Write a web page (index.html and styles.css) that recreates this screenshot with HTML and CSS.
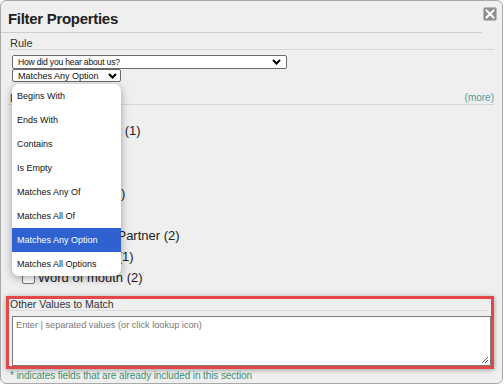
FILE: index.html
```html
<!DOCTYPE html>
<html lang="en">
<head>
    <meta charset="UTF-8">
    <meta name="viewport" content="width=device-width, initial-scale=1.0">
    <title>Filter Properties</title>
    <link rel="stylesheet" href="styles.css">
</head>
<body>
    <div class="dialog">
        <div class="title-bar">
            <h1>Filter Properties</h1>
        </div>
        <span class="close-btn">
            <svg width="14" height="14" viewBox="0 0 14 14">
                <rect x="0.5" y="0.5" width="13" height="13" rx="2" fill="#8d8d8d" stroke="#b8b8b8"/>
                <path d="M3.5 3.5 L10.5 10.5 M10.5 3.5 L3.5 10.5" stroke="#fff" stroke-width="2.2" stroke-linecap="round"/>
            </svg>
        </span>

        <div class="row-label">Rule</div>
        <div class="select wide">
            <span>How did you hear about us?</span>
            <svg class="chev" width="9" height="6" viewBox="0 0 9 6"><path d="M1 1 L4.5 4.5 L8 1" fill="none" stroke="#000" stroke-width="2"/></svg>
        </div>
        <div class="select narrow">
            <span>Matches Any Option</span>
            <svg class="chev" width="9" height="6" viewBox="0 0 9 6"><path d="M1 1 L4.5 4.5 L8 1" fill="none" stroke="#000" stroke-width="2"/></svg>
        </div>

        <div class="row-label lookup">
            <span>Lookup Values</span>
            <a href="#" class="more">(more)</a>
        </div>
        <ul class="values">
            <li><span class="box"></span>Advertisement (1)</li>
            <li><span class="box"></span>Email (3)</li>
            <li><span class="box"></span>Event (1)</li>
            <li><span class="box"></span>Newsletters (2)</li>
            <li><span class="box"></span>Search (4)</li>
            <li><span class="box"></span>Referral from Partner (2)</li>
            <li><span class="box"></span>Trade Shows (1)</li>
            <li><span class="box"></span>Word of mouth (2)</li>
        </ul>

        <div class="other">
            <div class="other-label">Other Values to Match</div>
            <div class="textarea">
                <span class="placeholder">Enter | separated values (or click lookup icon)</span>
                <svg class="grip" width="8" height="8" viewBox="0 0 8 8"><path d="M7 1 L1 7 M7 4 L4 7" stroke="#555" stroke-width="1"/></svg>
            </div>
        </div>
        <p class="note">* indicates fields that are already included in this section</p>

        <ul class="dropdown">
            <li>Begins With</li>
            <li>Ends With</li>
            <li>Contains</li>
            <li>Is Empty</li>
            <li>Matches Any Of</li>
            <li>Matches All Of</li>
            <li class="active">Matches Any Option</li>
            <li>Matches All Options</li>
        </ul>
    </div>
</body>
</html>
```

FILE: styles.css
```css
* {
    box-sizing: border-box;
    margin: 0;
    padding: 0;
}

body {
    font-family: "Liberation Sans", Arial, sans-serif;
    color: #222;
    background: #fff;
}

ul {
    list-style: none;
}

/* Dialog frame */
.dialog {
    position: relative;
    width: 503px;
    height: 384px;
    background: #efefef;
    border: 1px solid #a9a9a9;
    border-radius: 6px;
}

.title-bar {
    height: 32px;
    margin-right: 20px;
    padding: 9px 0 0 7px;
    border-bottom: 1px solid #cdcdcd;
}

.title-bar h1 {
    font-size: 15px;
    line-height: 18px;
    letter-spacing: -0.3px;
    color: #222;
}

.close-btn {
    position: absolute;
    top: 6px;
    right: 5px;
    line-height: 0;
}

/* Rule */
.row-label {
    display: flex;
    justify-content: space-between;
    margin: 0 8px 0 7px;
    padding: 4px 0 0 2px;
    height: 17px;
    font-size: 11px;
    line-height: 12px;
    color: #333;
    border-bottom: 1px solid #d6d6d6;
}

.select {
    display: flex;
    align-items: center;
    justify-content: space-between;
    margin-left: 11px;
    padding: 0 5px 0 5px;
    background: #fff;
    border: 1px solid #6a6a6a;
    border-radius: 2px;
    font-size: 9px;
    white-space: nowrap;
    color: #111;
}

.select.wide {
    width: 275px;
    height: 14px;
    margin-top: 5px;
    font-size: 8.6px;
    letter-spacing: -0.2px;
}

.select.narrow {
    width: 109px;
    height: 13px;
    padding-right: 3px;
}

.chev {
    flex-shrink: 0;
}

/* Lookup values */
.row-label.lookup {
    margin-top: 8px;
    padding-top: 2px;
    height: 15px;
}

.more {
    font-size: 10px;
    color: #4d9d9b;
    text-decoration: none;
}

.values {
    padding: 15px 0 0 21px;
}

.values li {
    display: flex;
    align-items: center;
    height: 21px;
    font-size: 13px;
    color: #222;
}

.box {
    width: 13px;
    height: 13px;
    margin-right: 3px;
    background: #fff;
    border: 1px solid #777;
    border-radius: 2px;
}

/* Other values (highlighted) */
.other {
    margin: 8px 8px 0 5px;
    border: 3px solid #e34747;
    box-shadow: 0 1px 5px rgba(0, 0, 0, 0.35);
}

.other-label {
    margin-right: 3px;
    padding-left: 1px;
    height: 12px;
    font-size: 10.5px;
    line-height: 11px;
    color: #333;
    border-bottom: 1px solid #dcdcdc;
}

.textarea {
    position: relative;
    height: 50px;
    margin: 5px 0 0 3px;
    padding: 3px 3px;
    background: #fff;
    border: 1px solid #7a7a7a;
    font-size: 9.2px;
}

.placeholder {
    color: #777;
}

.grip {
    position: absolute;
    right: 1px;
    bottom: 1px;
}

.note {
    padding: 1px 0 0 9px;
    font-size: 10px;
    line-height: 11px;
    letter-spacing: -0.1px;
    color: #3f8f70;
}

/* Open option list */
.dropdown {
    position: absolute;
    top: 83px;
    left: 11px;
    width: 109px;
    background: #fff;
    border-radius: 7px;
    overflow: hidden;
    box-shadow: 0 2px 8px rgba(0, 0, 0, 0.35);
}

.dropdown li {
    height: 24px;
    padding-left: 5px;
    font-size: 9px;
    line-height: 25px;
    color: #111;
}

.dropdown li.active {
    background: #2f62d0;
    color: #fff;
}
```
